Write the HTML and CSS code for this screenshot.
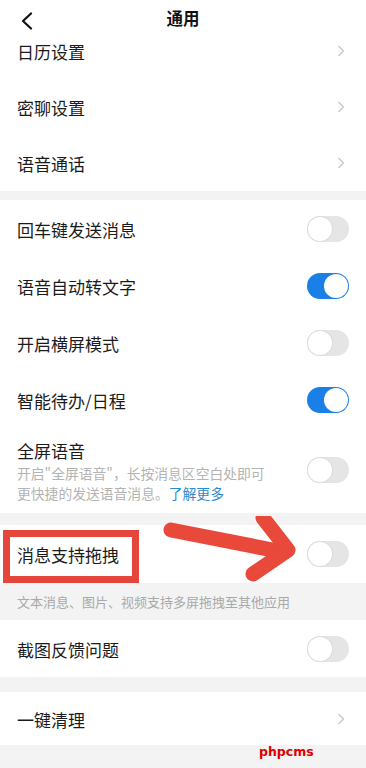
FILE: index.html
```html
<!DOCTYPE html>
<html lang="zh-CN">
<head>
<meta charset="utf-8">
<title>通用</title>
<link rel="stylesheet" href="styles.css">
</head>
<body>
<div class="page">
  <header class="topbar">
    <svg class="back" width="14" height="18" viewBox="0 0 14 18"><path d="M11 1.5 L3 9 L11 16.5" fill="none" stroke="#111" stroke-width="2.2" stroke-linecap="round" stroke-linejoin="round"/></svg>
    <h1 class="title">通用</h1>
  </header>

  <section class="group">
    <div class="row r56"><span class="label">日历设置</span><svg class="chev" width="8" height="12" viewBox="0 0 8 12"><path d="M1.5 1 L6.5 6 L1.5 11" fill="none" stroke="#c9c9c9" stroke-width="1.4"/></svg></div>
    <div class="row r56"><span class="label">密聊设置</span><svg class="chev" width="8" height="12" viewBox="0 0 8 12"><path d="M1.5 1 L6.5 6 L1.5 11" fill="none" stroke="#c9c9c9" stroke-width="1.4"/></svg></div>
    <div class="row r56"><span class="label">语音通话</span><svg class="chev" width="8" height="12" viewBox="0 0 8 12"><path d="M1.5 1 L6.5 6 L1.5 11" fill="none" stroke="#c9c9c9" stroke-width="1.4"/></svg></div>
  </section>

  <section class="group gap9">
    <div class="row r57"><span class="label">回车键发送消息</span><span class="switch"></span></div>
    <div class="row r57"><span class="label">语音自动转文字</span><span class="switch on"></span></div>
    <div class="row r57"><span class="label">开启横屏模式</span><span class="switch"></span></div>
    <div class="row r57"><span class="label">智能待办/日程</span><span class="switch on"></span></div>
    <div class="row tall">
      <div class="textcol">
        <span class="label">全屏语音</span>
        <span class="sub">开启"全屏语音"，长按消息区空白处即可</span>
        <span class="sub">更快捷的发送语音消息。<span class="link">了解更多</span></span>
      </div>
      <span class="switch"></span>
    </div>
  </section>

  <section class="group gap12">
    <div class="row r58 marked">
      <span class="label">消息支持拖拽</span><span class="switch"></span>
      <span class="redbox"></span>
      <svg class="arrow" width="150" height="75" viewBox="0 0 150 75"><g fill="none" stroke="#e8493b" stroke-width="15" stroke-linecap="round" stroke-linejoin="round"><path d="M18 14 L130 36"/><path d="M110 2 L135 34 L100 58"/></g></svg>
    </div>
  </section>
  <p class="desc">文本消息、图片、视频支持多屏拖拽至其他应用</p>

  <section class="group">
    <div class="row r57"><span class="label">截图反馈问题</span><span class="switch"></span></div>
  </section>

  <section class="group gap15">
    <div class="row r53"><span class="label">一键清理</span><svg class="chev" width="8" height="12" viewBox="0 0 8 12"><path d="M1.5 1 L6.5 6 L1.5 11" fill="none" stroke="#c9c9c9" stroke-width="1.4"/></svg></div>
  </section>

  <span class="watermark">phpcms</span>
</div>
</body>
</html>
```

FILE: styles.css
```css
* { box-sizing: border-box; }
html, body { margin: 0; padding: 0; }
body {
  background: #f3f3f3;
  font-family: "Noto Sans CJK SC", "Noto Sans", sans-serif;
  color: #1b1b1b;
}
.page {
  position: relative;
  width: 366px;
  height: 768px;
  overflow: hidden;
  padding-top: 23px;
  background: #f3f3f3;
}
.topbar {
  position: absolute;
  top: 0;
  left: 0;
  right: 0;
  height: 38px;
  background: #fff;
  z-index: 2;
  display: flex;
  align-items: center;
  justify-content: center;
}
.back {
  position: absolute;
  left: 20px;
  top: 12px;
}
.title {
  margin: 0;
  font-size: 16.5px;
  font-weight: 700;
  line-height: 24px;
  margin-top: -3px;
  color: #111;
}
.group { background: #fff; }
.gap9 { margin-top: 9px; }
.gap12 { margin-top: 12px; }
.gap15 { margin-top: 15px; }
.row {
  display: flex;
  align-items: center;
  justify-content: space-between;
  padding: 0 17px;
}
.r53 { height: 53px; }
.r56 { height: 56px; }
.r57 { height: 57px; }
.r58 { height: 58px; }
.label {
  font-size: 17px;
  line-height: 24px;
  padding-top: 2px;
}
.chev { margin-right: 4px; }
.tall {
  height: 85px;
  padding-top: 9px;
  padding-bottom: 10px;
}
.textcol { display: flex; flex-direction: column; }
.sub {
  display: block;
  height: 20px;
  font-size: 13.8px;
  line-height: 20px;
  color: #b3b3b3;
  white-space: nowrap;
}
.link { color: #2a8bcf; }
.switch {
  position: relative;
  width: 42px;
  height: 26px;
  border-radius: 13px;
  background: #e5e5e5;
  flex: none;
}
.switch::after {
  content: "";
  position: absolute;
  left: 1px;
  top: 1px;
  width: 24px;
  height: 24px;
  border-radius: 50%;
  background: #fff;
  box-shadow: 0 0 0 1px #dcdcdc;
}
.switch.on { background: #1a7fe6; }
.switch.on::after {
  left: 17px;
  box-shadow: none;
}
.marked { position: relative; }
.redbox {
  position: absolute;
  left: 3px;
  top: 5px;
  width: 136px;
  height: 53px;
  border: 7px solid #e4463c;
  pointer-events: none;
}
.arrow {
  position: absolute;
  left: 153px;
  top: -9px;
}
.desc {
  margin: 0;
  height: 37px;
  padding: 0 17px;
  font-size: 13px;
  line-height: 37px;
  color: #a9a9a9;
}
.watermark {
  position: absolute;
  left: 259px;
  top: 744px;
  font-family: "DejaVu Sans", sans-serif;
  font-weight: 700;
  font-size: 12.5px;
  color: #e00000;
}
```
